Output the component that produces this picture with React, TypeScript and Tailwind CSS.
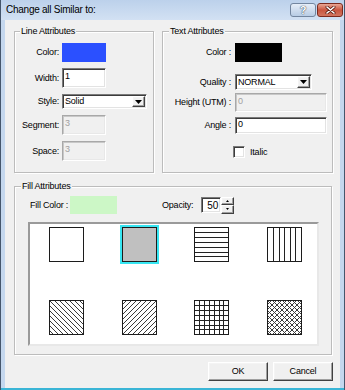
import React from 'react';

const sunken =
  'border border-t-[#7a7a7a] border-l-[#7a7a7a] border-r-white border-b-white shadow-[inset_1px_1px_0_#3c3c3c,inset_-1px_-1px_0_#e3e3e3]';
const disabledBox =
  'border border-t-[#a8a8a8] border-l-[#a8a8a8] border-r-white border-b-white shadow-[inset_1px_1px_0_#c8c8c8,inset_-1px_-1px_0_#e8e8e8] text-[#a0a0a0]';
const raised =
  'border border-t-white border-l-white border-r-[#404040] border-b-[#404040] shadow-[inset_-1px_-1px_0_#a0a0a0,inset_1px_1px_0_#f4f4f4]';
const group =
  'border border-[#bcbcbc] shadow-[inset_1px_1px_0_#fff,1px_1px_0_#fff] flex flex-col';

function Legend({ children, className }: { children: React.ReactNode; className: string }) {
  return <span className={`-mt-[6px] px-px bg-[#f0f0f0] w-fit ${className}`}>{children}</span>;
}

function DropArrow() {
  return (
    <div className={`${raised} w-[13px] my-px mr-px ml-auto flex items-center justify-center bg-[#f0f0f0]`}>
      <svg width="7" height="4" viewBox="0 0 7 4">
        <path d="M0 0h7L3.5 4z" fill="#000" />
      </svg>
    </div>
  );
}

type Kind = 'empty' | 'solid' | 'horiz' | 'vert' | 'back' | 'fwd' | 'grid' | 'cross';

function Pattern({ kind, id }: { kind: Kind; id: string }) {
  const lines: React.ReactNode[] = [];
  const ln = (x1: number, y1: number, x2: number, y2: number, k: string, c = '#222') =>
    lines.push(<line key={k} x1={x1} y1={y1} x2={x2} y2={y2} stroke={c} strokeWidth="1" />);
  if (kind === 'horiz' || kind === 'grid') {
    [5.5, 10.5, 15.5, 20.5, 25.5, 29.5].forEach((y, i) => ln(0, y, 35, y, 'h' + i));
  }
  if (kind === 'vert') {
    [6.5, 12.5, 17.5, 23.5, 28.5].forEach((x, i) => ln(x, 0, x, 35, 'v' + i));
  }
  if (kind === 'grid') {
    [5.5, 10.5, 15.5, 20.5, 25.5, 29.5].forEach((x, i) => ln(x, 0, x, 35, 'g' + i));
  }
  if (kind === 'back' || kind === 'cross') {
    for (let k = -35; k <= 35; k += 5) ln(k, 0, k + 35, 35, 'b' + k, '#3a3a3a');
  }
  if (kind === 'fwd' || kind === 'cross') {
    for (let k = -35; k <= 35; k += 5) ln(k, 35, k + 35, 0, 'f' + k, '#3a3a3a');
  }
  return (
    <svg width="35" height="35" viewBox="0 0 35 35" className="block">
      <defs>
        <clipPath id={id}>
          <rect x="1" y="1" width="33" height="33" />
        </clipPath>
      </defs>
      <rect x="0" y="0" width="35" height="35" fill={kind === 'solid' ? '#c0c0c0' : '#fff'} />
      <g clipPath={`url(#${id})`}>{lines}</g>
      <rect x="0.5" y="0.5" width="34" height="34" fill="none" stroke="#1c1c1c" />
    </svg>
  );
}

const patterns: Kind[] = ['empty', 'solid', 'horiz', 'vert', 'back', 'fwd', 'grid', 'cross'];

export default function App() {
  return (
    <div className="w-[345px] h-[390px] flex flex-col bg-[#c4d7ee] border-x border-[#45566c] font-['Liberation_Sans',Arial,sans-serif] text-[9px] tracking-[-0.2px] leading-[11px] text-black">
      {/* title bar */}
      <div className="h-[20px] flex items-start pl-[5px] pr-px bg-gradient-to-b from-[#bcd1eb] to-[#d2e1f3]">
        <span className="text-[10px] tracking-[-0.25px] leading-[20px]">Change all Similar to:</span>
        <div className="ml-auto mt-[3px] flex gap-px">
          <div className="w-[26px] h-[14px] rounded-[3px] border border-[#73869f] bg-gradient-to-b from-[#e6eef8] to-[#b8cce4] flex items-center justify-center">
            <span className="text-[11px] font-bold leading-none text-white [text-shadow:0_0_1px_#2e3d52,0_0_1px_#2e3d52]">?</span>
          </div>
          <div className="w-[26px] h-[14px] rounded-[3px] border border-[#7c2a1e] bg-gradient-to-b from-[#e9a795] via-[#c9553f] to-[#d27560] flex items-center justify-center">
            <svg width="11" height="8" viewBox="0 0 11 8">
              <path d="M2 1l7 6M9 1L2 7" stroke="#5a1c12" strokeWidth="3" strokeLinecap="round" />
              <path d="M2 1l7 6M9 1L2 7" stroke="#fff" strokeWidth="1.6" strokeLinecap="round" />
            </svg>
          </div>
        </div>
      </div>

      {/* client area */}
      <div className="flex-1 mx-[4px] bg-[#f0f0f0] pl-[9px] pt-[11px] flex flex-col">
        <div className="flex gap-[8px]">
          {/* Line Attributes */}
          <div className={`${group} w-[140px] h-[142px]`}>
            <Legend className="ml-[5px]">Line Attributes</Legend>
            <div className="flex flex-col gap-[6px] mt-[6px]">
              <div className="flex items-center">
                <span className="w-[47px] pr-[3px] text-right">Color:</span>
                <div className="w-[44px] h-[19px] bg-[#2b50ff]" />
              </div>
              <div className="flex items-center">
                <span className="w-[47px] pr-[3px] text-right">Width:</span>
                <div className={`${sunken} w-[44px] h-[20px] bg-white px-[2px] pt-[2px]`}>1</div>
              </div>
              <div className="flex items-center">
                <span className="w-[47px] pr-[3px] text-right">Style:</span>
                <div className={`${sunken} w-[85px] h-[15px] bg-white flex items-stretch`}>
                  <span className="pl-[2px] leading-[13px]">Solid</span>
                  <DropArrow />
                </div>
              </div>
              <div className="flex items-center">
                <span className="w-[47px] pr-[3px] text-right">Segment:</span>
                <div className={`${disabledBox} w-[44px] h-[20px] px-[2px] pt-[2px]`}>3</div>
              </div>
              <div className="flex items-center">
                <span className="w-[47px] pr-[3px] text-right">Space:</span>
                <div className={`${disabledBox} w-[44px] h-[20px] px-[2px] pt-[2px]`}>3</div>
              </div>
            </div>
          </div>

          {/* Text Attributes */}
          <div className={`${group} w-[171px] h-[142px]`}>
            <Legend className="ml-[6px]">Text Attributes</Legend>
            <div className="flex items-center mt-[6px]">
              <span className="w-[72px] pr-[4px] text-right">Color :</span>
              <div className="w-[47px] h-[19px] bg-black" />
            </div>
            <div className="flex items-center mt-[12px]">
              <span className="w-[72px] pr-[4px] text-right">Quality :</span>
              <div className={`${sunken} w-[77px] h-[16px] bg-white flex items-stretch`}>
                <span className="pl-[2px] leading-[14px]">NORMAL</span>
                <DropArrow />
              </div>
            </div>
            <div className="flex items-center mt-[3px]">
              <span className="w-[72px] pr-[4px] text-right">Height (UTM) :</span>
              <div className={`${disabledBox} w-[92px] h-[19px] px-[2px] pt-[2px]`}>0</div>
            </div>
            <div className="flex items-center mt-[5px]">
              <span className="w-[72px] pr-[4px] text-right">Angle :</span>
              <div className={`${sunken} w-[92px] h-[17px] bg-white px-[2px] pt-px`}>0</div>
            </div>
            <div className="flex items-center mt-[12px] pl-[70px]">
              <div className={`${sunken} w-[12px] h-[12px] bg-white`} />
              <span className="ml-[5px]">Italic</span>
            </div>
          </div>
        </div>

        {/* Fill Attributes */}
        <div className={`${group} w-[318px] h-[169px] mt-[13px]`}>
          <Legend className="ml-[6px]">Fill Attributes</Legend>
          <div className="flex items-center h-[18px] mt-[4px] pl-[15px]">
            <span className="w-[40px]">Fill Color :</span>
            <div className="w-[47px] h-[18px] bg-[#ccf7c6]" />
            <span className="ml-[45px] w-[39px]">Opacity:</span>
            <div className={`${sunken} w-[20px] h-[16px] bg-white text-right pr-[2px] pt-[2px] text-[10px]`}>50</div>
            <div className="flex flex-col w-[13px] h-[17px]">
              <div className={`${raised} flex-1 bg-[#f0f0f0] flex items-center justify-center`}>
                <svg width="3" height="2" viewBox="0 0 3 2"><path d="M0 2h3L1.5 0z" fill="#000" /></svg>
              </div>
              <div className={`${raised} flex-1 bg-[#f0f0f0] flex items-center justify-center`}>
                <svg width="3" height="2" viewBox="0 0 3 2"><path d="M0 0h3L1.5 2z" fill="#000" /></svg>
              </div>
            </div>
          </div>
          <div className="mt-[8px] ml-[13px] w-[291px] h-[124px] bg-white border-2 border-t-[#9a9a9a] border-l-[#9a9a9a] border-r-[#e8e8e8] border-b-[#e8e8e8]">
            <div className="grid grid-cols-[repeat(4,35px)] gap-x-[37.7px] gap-y-[38px] pl-[19px] pt-[3px]">
              {patterns.map((k, i) => (
                <div key={k} className={k === 'solid' ? 'outline-2 outline-[#37e6f2]' : ''}>
                  <Pattern kind={k} id={`clip${i}`} />
                </div>
              ))}
            </div>
          </div>
        </div>

        {/* buttons */}
        <div className="w-[319px] mt-[7px] flex justify-end gap-[5px]">
          <button className={`${raised} w-[60px] h-[19px] bg-[#f0f0f0] text-[9px]`}>OK</button>
          <button className={`${raised} w-[60px] h-[19px] bg-[#f0f0f0] text-[9px]`}>Cancel</button>
        </div>
      </div>
      <div className="h-[2px] bg-[#3ab5d6]" />
    </div>
  );
}
